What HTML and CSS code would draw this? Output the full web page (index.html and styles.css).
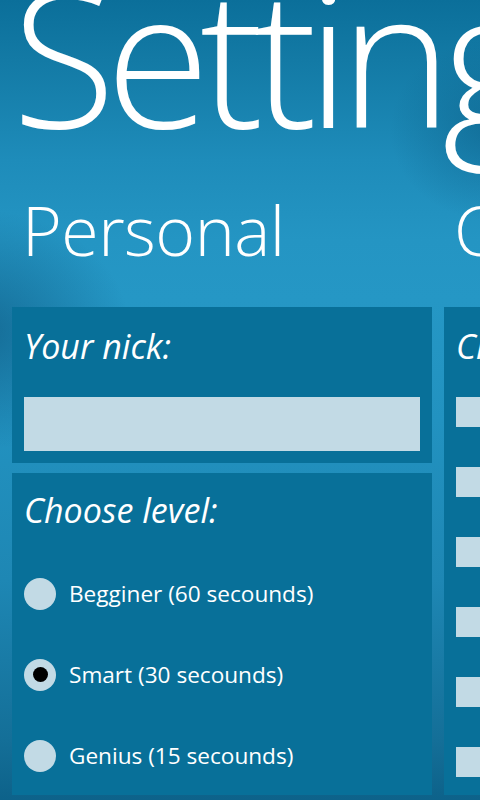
FILE: index.html
```html
<!DOCTYPE html>
<html>
<head>
<meta charset="utf-8">
<link rel="stylesheet" href="styles.css">
</head>
<body>
<div class="page">
  <div class="shade shade-left"></div>
  <div class="shade shade-right"></div>
  <h1 class="title">Settings</h1>
  <div class="sections">
    <section class="column">
      <h2 class="heading">Personal</h2>
      <div class="panel panel-nick">
        <div class="label">Your nick:</div>
        <div class="input"></div>
      </div>
      <div class="panel panel-level">
        <div class="label">Choose level:</div>
        <div class="radios">
          <div class="radio"><span class="dot"></span><span class="radio-text">Begginer (60 secounds)</span></div>
          <div class="radio checked"><span class="dot"></span><span class="radio-text">Smart (30 secounds)</span></div>
          <div class="radio"><span class="dot"></span><span class="radio-text">Genius (15 secounds)</span></div>
        </div>
      </div>
    </section>
    <section class="column">
      <h2 class="heading">Categories</h2>
      <div class="panel panel-cats">
        <div class="label">Choose categories:</div>
        <div class="checks">
          <div class="check"><span class="box"></span><span class="check-text">Animals</span></div>
          <div class="check"><span class="box"></span><span class="check-text">Cities</span></div>
          <div class="check"><span class="box"></span><span class="check-text">Countries</span></div>
          <div class="check"><span class="box"></span><span class="check-text">Food</span></div>
          <div class="check"><span class="box"></span><span class="check-text">Names</span></div>
          <div class="check"><span class="box"></span><span class="check-text">Sports</span></div>
        </div>
      </div>
    </section>
  </div>
</div>
</body>
</html>
```
FILE: styles.css
```css
html, body {
  margin: 0;
  padding: 0;
  width: 480px;
  height: 800px;
  overflow: hidden;
}
body {
  font-family: "Open Sans", "Noto Sans", sans-serif;
  color: #ffffff;
  background: #0c6089;
}
.page {
  position: relative;
  width: 480px;
  height: 800px;
  overflow: hidden;
  background: linear-gradient(180deg, #0b6f9a 0px, #137aa5 60px, #1e8cba 160px, #2495c3 240px, #2597c5 300px, #2292c0 420px, #1e87b4 580px, #146f98 740px, #0d628a 800px);
}
.shade {
  position: absolute;
  border-radius: 50%;
  pointer-events: none;
}
.shade-left {
  left: -170px;
  top: 210px;
  width: 300px;
  height: 240px;
  background: radial-gradient(closest-side, rgba(10, 80, 120, 0.6), rgba(10, 80, 120, 0));
}
.shade-right {
  left: 390px;
  top: 40px;
  width: 200px;
  height: 180px;
  background: radial-gradient(closest-side, rgba(10, 90, 130, 0.5), rgba(10, 90, 130, 0));
}
.title {
  position: relative;
  margin: 0;
  padding-left: 12px;
  font-weight: 300;
  font-size: 190px;
  line-height: 190px;
  height: 190px;
  margin-top: -40px;
  white-space: nowrap;
  letter-spacing: -10px;
}
.sections {
  position: relative;
  display: flex;
  gap: 12px;
  padding-left: 12px;
  width: 1000px;
}
.column {
  width: 420px;
  flex: none;
  display: flex;
  flex-direction: column;
  gap: 10px;
}
.heading {
  margin: 0;
  padding-left: 10px;
  font-weight: 300;
  font-size: 68px;
  letter-spacing: -0.5px;
  line-height: 100px;
  height: 90px;
  margin-top: 30px;
  margin-bottom: 27px;
  white-space: nowrap;
}
.panel {
  background: #087099;
  padding: 0 12px;
  box-sizing: border-box;
}
.panel-nick {
  height: 156px;
  padding-top: 19px;
}
.label {
  font-style: italic;
  font-size: 34px;
  line-height: 40px;
  white-space: nowrap;
}
.input {
  margin-top: 31px;
  height: 54px;
  background: #c2dae5;
}
.panel-level {
  height: 322px;
  padding-top: 17px;
}
.radios {
  display: flex;
  flex-direction: column;
  gap: 48px;
  margin-top: 47px;
}
.radio {
  display: flex;
  align-items: center;
  gap: 13px;
  height: 33px;
}
.dot {
  width: 32px;
  height: 32px;
  border-radius: 50%;
  background: #c2dae5;
  flex: none;
  display: flex;
  align-items: center;
  justify-content: center;
}
.radio.checked .dot::after {
  content: "";
  width: 15px;
  height: 15px;
  border-radius: 50%;
  background: #000000;
}
.radio-text {
  font-size: 22.6px;
  line-height: 30px;
  white-space: nowrap;
}
.panel-cats {
  height: 488px;
  padding-top: 19px;
}
.checks {
  display: flex;
  flex-direction: column;
  gap: 40px;
  margin-top: 31px;
}
.check {
  display: flex;
  align-items: center;
  gap: 14px;
  height: 30px;
}
.box {
  width: 30px;
  height: 30px;
  background: #c2dae5;
  flex: none;
}
.check-text {
  font-size: 22px;
  white-space: nowrap;
}
```
